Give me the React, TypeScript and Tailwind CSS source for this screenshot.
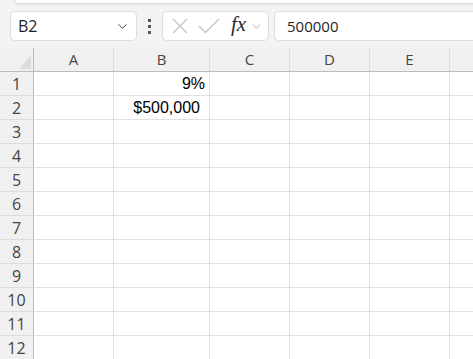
import { ChevronDown } from "lucide-react"

const columns = [
  { id: "A", w: "w-[80px]" },
  { id: "B", w: "w-[96px]" },
  { id: "C", w: "w-[80px]" },
  { id: "D", w: "w-[80px]" },
  { id: "E", w: "w-[80px]" },
  { id: "F", w: "w-[80px]" },
]

// currency format keeps a trailing pad, like Excel's accounting format
const cells: Record<string, { text: string; pad?: boolean }> = {
  B1: { text: "9%" },
  B2: { text: "$500,000", pad: true },
}

const rows = Array.from({ length: 12 }, (_, i) => i + 1)

export default function App() {
  return (
    <div className="w-[473px] h-[359px] overflow-hidden bg-[#f3f3f3] font-['Open_Sans','Noto_Sans',sans-serif]">
      {/* ribbon edge */}
      <div className="ml-[14px] h-[4px] bg-white border-l border-b border-[#dcdcdc] rounded-bl-[6px] shadow-[0_1px_2px_rgba(0,0,0,0.06)]" />

      {/* formula bar */}
      <div className="mt-[7px] flex items-center h-[30px] pl-[10px]">
        <div className="w-[127px] h-[30px] flex items-center justify-between bg-white border border-[#dedede] rounded-[5px] pl-[7px] pr-[6px]">
          <span className="text-[16px] text-[#1f1f1f]">B2</span>
          <ChevronDown className="w-[15px] h-[15px] text-[#424242]" strokeWidth={1.6} />
        </div>
        <div className="w-[25px] flex flex-col items-center gap-[3px]">
          <span className="w-[3px] h-[3px] bg-[#555]" />
          <span className="w-[3px] h-[3px] bg-[#555]" />
          <span className="w-[3px] h-[3px] bg-[#555]" />
        </div>
        <div className="w-[107px] h-[30px] flex items-center bg-white border border-[#dedede] rounded-[5px] pl-[7px]">
          <svg width="18" height="18" viewBox="0 0 18 18" className="ml-[1px]">
            <path d="M2 2 L16 16 M16 2 L2 16" stroke="#c4c4c4" strokeWidth="1.3" fill="none" />
          </svg>
          <svg width="22" height="18" viewBox="0 0 22 18" className="ml-[9px]">
            <path d="M1 9 L7.5 15.5 L21 2" stroke="#c4c4c4" strokeWidth="1.3" fill="none" />
          </svg>
          <span className="ml-[11px] text-[21px] leading-none italic text-[#2b2b2b] font-['Liberation_Serif',serif] -mt-[3px]">
            fx
          </span>
          <ChevronDown className="ml-[4px] w-[13px] h-[13px] text-[#9a9a9a]" strokeWidth={1.4} />
        </div>
        <div className="ml-[5px] flex-1 h-[30px] flex items-center bg-white border border-[#dedede] border-r-0 rounded-l-[5px] pl-[12px]">
          <span className="text-[15px] text-[#1f1f1f]">500000</span>
        </div>
      </div>

      {/* grid */}
      <div className="mt-[7px] bg-white">
        <div className="flex h-[24px] bg-[#f0f0f0] border-b border-[#bcbcbc]">
          <div className="w-[34px] shrink-0 border-r border-[#bcbcbc] relative">
            <div className="absolute right-[2px] bottom-[2px] w-0 h-0 border-l-[12px] border-l-transparent border-b-[14px] border-b-[#dcdcdc]" />
          </div>
          {columns.map((c) => (
            <div
              key={c.id}
              className={`${c.w} shrink-0 border-r border-[#dcdcdc] flex items-center justify-center text-[15px] text-[#444]`}
            >
              {c.id === "F" ? "" : c.id}
            </div>
          ))}
        </div>
        {rows.map((r) => (
          <div key={r} className="flex h-[24px] border-b border-[#e1e1e1]">
            <div className="w-[34px] shrink-0 bg-[#f0f0f0] border-r border-[#bcbcbc] flex items-center justify-center text-[16px] text-[#444] -mb-px border-b border-b-[#dcdcdc]">
              {r}
            </div>
            {columns.map((c) => {
              const cell = cells[`${c.id}${r}`]
              return (
                <div
                  key={c.id}
                  className={`${c.w} shrink-0 border-r border-[#e1e1e1] flex items-center justify-end text-[16px] text-black font-['Liberation_Sans',Arial,sans-serif] ${
                    cell?.pad ? "pr-[9px]" : "pr-[4px]"
                  }`}
                >
                  {cell?.text ?? ""}
                </div>
              )
            })}
          </div>
        ))}
      </div>
    </div>
  )
}
